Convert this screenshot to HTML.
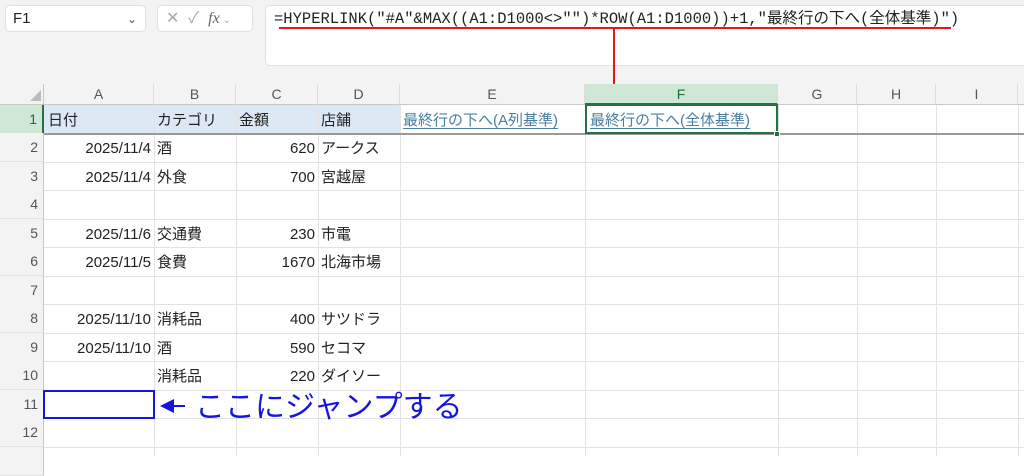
<!DOCTYPE html>
<html><head><meta charset="utf-8"><style>
*{margin:0;padding:0;box-sizing:border-box}
body{width:1024px;height:456px;overflow:hidden;background:#fff;position:relative;font-family:"Liberation Sans","Noto Sans CJK JP",sans-serif;color:#222}
.a{position:absolute}
.top{left:0;top:0;width:1024px;height:84px;background:#f3f3f3}
.box{background:#fff;border:1px solid #e0e0e0;border-radius:5px}
.ch{top:84px;height:21px;background:#f3f3f3;border-right:1px solid #dcdcdc;border-bottom:1px solid #c8c8c8;text-align:center;font-size:14px;line-height:21px;color:#555}
.rh{left:0;width:44px;background:#f3f3f3;border-right:1px solid #c8c8c8;border-bottom:1px solid #e2e2e2;text-align:right;padding-right:5px;font-size:14px;color:#555;height:29px;line-height:28px}
.vl{top:105px;width:1px;height:351px;background:#e2e2e2}
.hl{left:44px;width:980px;height:1px;background:#e2e2e2}
.c{font-size:15px;height:28px;line-height:29px;white-space:nowrap}
.r{text-align:right}
.lk{color:#4a7fa0;text-decoration:underline;text-underline-offset:3px}
</style></head><body>
<div class="a top"></div>
<div class="a box" style="left:5px;top:5px;width:141px;height:27px;font-size:15px;line-height:26px;padding-left:7px">F1<span class="a" style="right:8px;top:0;color:#555;font-size:12px">&#8964;</span></div>
<div class="a box" style="left:157px;top:5px;width:96px;height:27px;color:#aaa;font-size:16px;line-height:25px;padding-left:8px">✕ &nbsp;✓ &nbsp;<i style="color:#666;font-family:'Liberation Serif',serif">fx</i><span style="font-size:10px"> ⌄</span></div>
<div class="a box" style="left:265px;top:5px;width:770px;height:61px"></div>
<div class="a" style="left:274px;top:6px;font-family:'Liberation Mono','Noto Sans CJK JP',monospace;font-size:15.5px;color:#222;white-space:nowrap">=HYPERLINK("#A"&amp;MAX((A1:D1000&lt;&gt;"")*ROW(A1:D1000))+1,"最終行の下へ(全体基準)")</div>
<div class="a" style="left:279px;top:27px;width:672px;height:2px;background:#e8161b"></div>
<div class="a" style="left:613px;top:28px;width:2px;height:60px;background:#e8161b"></div>
<div class="a" style="left:607px;top:86px;width:0;height:0;border-left:7px solid transparent;border-right:7px solid transparent;border-top:14px solid #e8161b"></div>
<div class="a" style="left:0;top:84px;width:44px;height:21px;background:#f3f3f3;border-right:1px solid #c8c8c8;border-bottom:1px solid #c8c8c8"></div>
<div class="a" style="left:30px;top:90px;width:0;height:0;border-left:11px solid transparent;border-bottom:11px solid #bbb"></div>
<div class="a ch" style="left:44px;width:110px">A</div>
<div class="a ch" style="left:154px;width:82px">B</div>
<div class="a ch" style="left:236px;width:82px">C</div>
<div class="a ch" style="left:318px;width:82px">D</div>
<div class="a ch" style="left:400px;width:185px">E</div>
<div class="a ch" style="left:585px;width:193px;background:#cfe8d6;color:#1e6b3a;border-bottom:2px solid #217346">F</div>
<div class="a ch" style="left:778px;width:79px">G</div>
<div class="a ch" style="left:857px;width:79px">H</div>
<div class="a ch" style="left:936px;width:82px">I</div>
<div class="a ch" style="left:1018px;width:10px"></div>
<div class="a" style="left:44px;top:105px;width:356px;height:28px;background:#dce9f5"></div>
<div class="a vl" style="left:154px"></div><div class="a vl" style="left:236px"></div><div class="a vl" style="left:318px"></div><div class="a vl" style="left:400px"></div><div class="a vl" style="left:585px"></div><div class="a vl" style="left:778px"></div><div class="a vl" style="left:857px"></div><div class="a vl" style="left:936px"></div><div class="a vl" style="left:1018px"></div>
<div class="a" style="left:44px;top:133px;width:980px;height:2px;background:#9a9a9a"></div>
<div class="a hl" style="top:162px"></div><div class="a hl" style="top:190px"></div><div class="a hl" style="top:219px"></div><div class="a hl" style="top:247px"></div><div class="a hl" style="top:276px"></div><div class="a hl" style="top:304px"></div><div class="a hl" style="top:333px"></div><div class="a hl" style="top:361px"></div><div class="a hl" style="top:390px"></div><div class="a hl" style="top:418px"></div><div class="a hl" style="top:447px"></div>
<div class="a rh" style="top:105px;background:#cfe8d6;color:#1e6b3a;border-right:2px solid #217346">1</div>
<div class="a rh" style="top:133px">2</div><div class="a rh" style="top:162px">3</div><div class="a rh" style="top:190px">4</div><div class="a rh" style="top:219px">5</div><div class="a rh" style="top:247px">6</div><div class="a rh" style="top:276px">7</div><div class="a rh" style="top:304px">8</div><div class="a rh" style="top:333px">9</div><div class="a rh" style="top:361px">10</div><div class="a rh" style="top:390px">11</div><div class="a rh" style="top:418px">12</div><div class="a rh" style="top:447px"></div>
<div class="a" style="left:585px;top:104px;width:193px;height:30px;border:2px solid #217346"></div>
<div class="a" style="left:774px;top:131px;width:6px;height:6px;background:#217346;border:1px solid #fff"></div>
<div class="a c" style="left:48px;top:106px">日付</div>
<div class="a c" style="left:157px;top:106px">カテゴリ</div>
<div class="a c" style="left:239px;top:106px">金額</div>
<div class="a c" style="left:321px;top:106px">店舗</div>
<div class="a c lk" style="left:403px;top:106px">最終行の下へ(A列基準)</div>
<div class="a c lk" style="left:590px;top:106px">最終行の下へ(全体基準)</div>
<div class="a c r" style="left:44px;width:107px;top:134px">2025/11/4</div><div class="a c" style="left:157px;top:134px">酒</div><div class="a c r" style="left:236px;width:79px;top:134px">620</div><div class="a c" style="left:321px;top:134px">アークス</div>
<div class="a c r" style="left:44px;width:107px;top:163px">2025/11/4</div><div class="a c" style="left:157px;top:163px">外食</div><div class="a c r" style="left:236px;width:79px;top:163px">700</div><div class="a c" style="left:321px;top:163px">宮越屋</div>
<div class="a c r" style="left:44px;width:107px;top:220px">2025/11/6</div><div class="a c" style="left:157px;top:220px">交通費</div><div class="a c r" style="left:236px;width:79px;top:220px">230</div><div class="a c" style="left:321px;top:220px">市電</div>
<div class="a c r" style="left:44px;width:107px;top:248px">2025/11/5</div><div class="a c" style="left:157px;top:248px">食費</div><div class="a c r" style="left:236px;width:79px;top:248px">1670</div><div class="a c" style="left:321px;top:248px">北海市場</div>
<div class="a c r" style="left:44px;width:107px;top:305px">2025/11/10</div><div class="a c" style="left:157px;top:305px">消耗品</div><div class="a c r" style="left:236px;width:79px;top:305px">400</div><div class="a c" style="left:321px;top:305px">サツドラ</div>
<div class="a c r" style="left:44px;width:107px;top:334px">2025/11/10</div><div class="a c" style="left:157px;top:334px">酒</div><div class="a c r" style="left:236px;width:79px;top:334px">590</div><div class="a c" style="left:321px;top:334px">セコマ</div>
<div class="a c" style="left:157px;top:362px">消耗品</div><div class="a c r" style="left:236px;width:79px;top:362px">220</div><div class="a c" style="left:321px;top:362px">ダイソー</div>
<div class="a" style="left:43px;top:390px;width:112px;height:29px;border:2px solid #1515e0;background:#fff"></div>
<div class="a" style="left:165px;top:405px;width:20px;height:2px;background:#1515e0"></div>
<div class="a" style="left:160px;top:399px;width:0;height:0;border-top:7px solid transparent;border-bottom:7px solid transparent;border-right:14px solid #1515e0"></div>
<div class="a" style="left:195px;top:388px;font-size:30px;line-height:40px;color:#1515e0;white-space:nowrap">ここにジャンプする</div>
</body></html>
